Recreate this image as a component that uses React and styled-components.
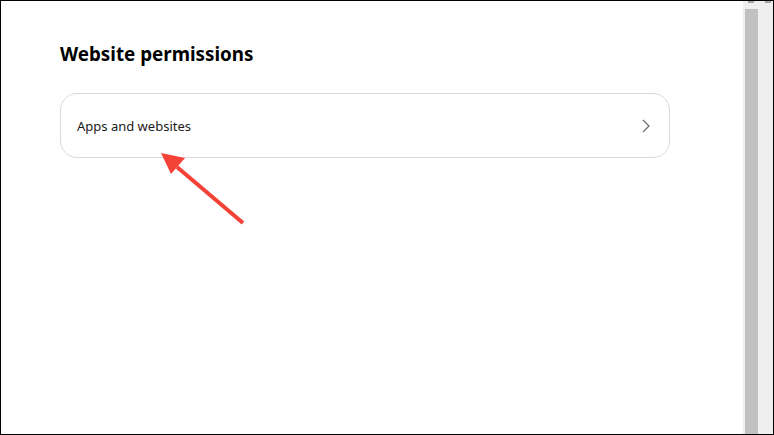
import React from "react";
import styled, { createGlobalStyle } from "styled-components";

const Global = createGlobalStyle`
  html, body { margin: 0; padding: 0; background: #fff; }
  #root { width: 774px; height: 435px; }
`;

const Frame = styled.div`
  position: relative;
  box-sizing: border-box;
  width: 774px;
  height: 435px;
  border: 1px solid #000;
  display: flex;
  overflow: hidden;
  font-family: "Noto Sans", "Open Sans", sans-serif;
`;

const Main = styled.div`
  flex: 1;
  padding: 40px 0 0 59px;
  display: flex;
  flex-direction: column;
`;

const Title = styled.h1`
  margin: 0;
  font-size: 18.8px;
  font-weight: 700;
  color: #000;
  line-height: 26px;
`;

const Card = styled.div`
  margin-top: 26px;
  box-sizing: border-box;
  width: 610px;
  height: 65px;
  border: 1px solid #dadada;
  border-radius: 17px;
  display: flex;
  align-items: center;
  justify-content: space-between;
  padding: 0 18px 0 16px;
`;

const Label = styled.span`
  font-size: 13px;
  color: #1a1a1a;
`;

const Scrollbar = styled.div`
  position: relative;
  width: 30px;
  background: #efefef;
  display: flex;
  justify-content: flex-start;
  padding-left: 2px;
  box-sizing: border-box;
`;

const Thumb = styled.div`
  margin-top: 8px;
  width: 13px;
  background: #c1c1c1;
`;

const Notch = styled.div`
  position: absolute;
  top: 0;
  left: ${(p) => p.$left}px;
  width: 6px;
  height: 2px;
  background: #a3a3a3;
`;

const ArrowLayer = styled.svg`
  position: absolute;
  left: 0;
  top: 0;
  pointer-events: none;
`;

export default function App() {
  return (
    <>
      <Global />
      <Frame>
        <Main>
          <Title>Website permissions</Title>
          <Card>
            <Label>Apps and websites</Label>
            <svg width="10" height="14" viewBox="0 0 10 14">
              <path d="M2 1 L8 7 L2 13" fill="none" stroke="#6b6b6b" strokeWidth="1.2" />
            </svg>
          </Card>
        </Main>
        <Scrollbar>
          <Notch $left={5} />
          <Notch $left={22} />
          <Thumb />
        </Scrollbar>
        <ArrowLayer width="774" height="435" viewBox="0 0 774 435">
          <line x1="242" y1="222" x2="176" y2="166" stroke="#f44336" strokeWidth="4" strokeLinecap="butt" />
          <polygon points="160,152 184,157 170,173" fill="#f44336" />
        </ArrowLayer>
      </Frame>
    </>
  );
}
